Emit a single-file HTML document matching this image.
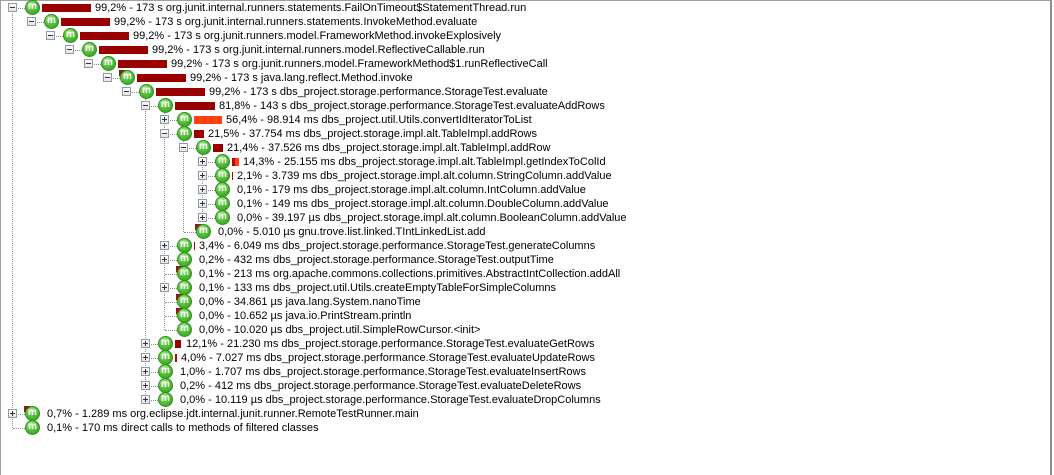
<!DOCTYPE html>
<html><head><meta charset="utf-8"><style>
body{margin:0;width:1054px;height:475px;background:#fff;position:relative;overflow:hidden;font-family:"Liberation Sans",Tahoma,sans-serif;font-size:11px;color:#000}
.fr{position:absolute;top:0;left:0;width:1px;height:475px;background:#a0a0a0}
.ft{position:absolute;top:0;left:0;width:1052px;height:1px;background:#a0a0a0}
.fr2{position:absolute;top:0;left:1050px;width:2px;height:475px;background:#8a8e96}
.v{position:absolute;width:0;border-left:1px dotted #8c8c8c}
.r{position:absolute;height:14px;width:900px}
.h{position:absolute;left:13px;top:7px;width:12px;border-top:1px dotted #8c8c8c}
.x{position:absolute;left:8px;top:2px;width:7px;height:7px;border:1px solid #8f9aa8;background:linear-gradient(#fff,#e4e4e4)}
.x:before{content:"";position:absolute;left:1px;top:3px;width:5px;height:1px;background:#333}
.p:after{content:"";position:absolute;left:3px;top:1px;width:1px;height:5px;background:#333}
.i{position:absolute;left:25px;top:-1px;width:13px;height:13px;border-radius:50%;border:1px solid #2f8f1c;background:radial-gradient(circle at 40% 30%,#b9f0a0 0,#55c23a 45%,#2e9a1c 100%);color:#fff;font-weight:bold;font-size:10px;line-height:12px;text-align:center;font-family:"Liberation Sans",sans-serif}
.c{position:absolute;left:24px;top:-1px;width:0;height:0;border-top:7px solid #8b1a1a;border-right:7px solid transparent}
.b{position:absolute;left:42px;top:3px;height:8px;background:#990000}
.t{position:absolute;top:0;line-height:14px;white-space:nowrap}
</style></head><body>
<div class="fr"></div><div class="ft"></div><div class="fr2"></div>
<div class="v" style="left:12px;top:8px;height:420px"></div>
<div class="v" style="left:145px;top:99px;height:301px"></div>
<div class="v" style="left:164px;top:113px;height:217px"></div>
<div class="v" style="left:183px;top:141px;height:91px"></div>
<div class="v" style="left:202px;top:155px;height:63px"></div>

<div class="r" style="top:1px;left:0px"><div class="h"></div><div class="x"></div><div class="i">m</div><div class="b" style="width:49px"></div><div class="t" style="left:95px">99,2% - 173 s org.junit.internal.runners.statements.FailOnTimeout$StatementThread.run</div></div>
<div class="r" style="top:15px;left:19px"><div class="h"></div><div class="x"></div><div class="i">m</div><div class="b" style="width:49px"></div><div class="t" style="left:95px">99,2% - 173 s org.junit.internal.runners.statements.InvokeMethod.evaluate</div></div>
<div class="r" style="top:29px;left:38px"><div class="h"></div><div class="x"></div><div class="i">m</div><div class="b" style="width:49px"></div><div class="t" style="left:95px">99,2% - 173 s org.junit.runners.model.FrameworkMethod.invokeExplosively</div></div>
<div class="r" style="top:43px;left:57px"><div class="h"></div><div class="x"></div><div class="i">m</div><div class="b" style="width:49px"></div><div class="t" style="left:95px">99,2% - 173 s org.junit.internal.runners.model.ReflectiveCallable.run</div></div>
<div class="r" style="top:57px;left:76px"><div class="h"></div><div class="x"></div><div class="i">m</div><div class="b" style="width:49px"></div><div class="t" style="left:95px">99,2% - 173 s org.junit.runners.model.FrameworkMethod$1.runReflectiveCall</div></div>
<div class="r" style="top:71px;left:95px"><div class="h"></div><div class="x"></div><div class="c"></div><div class="i">m</div><div class="b" style="width:49px"></div><div class="t" style="left:95px">99,2% - 173 s java.lang.reflect.Method.invoke</div></div>
<div class="r" style="top:85px;left:114px"><div class="h"></div><div class="x"></div><div class="i">m</div><div class="b" style="width:49px"></div><div class="t" style="left:95px">99,2% - 173 s dbs_project.storage.performance.StorageTest.evaluate</div></div>
<div class="r" style="top:99px;left:133px"><div class="h"></div><div class="x"></div><div class="i">m</div><div class="b" style="width:40px"></div><div class="t" style="left:86px">81,8% - 143 s dbs_project.storage.performance.StorageTest.evaluateAddRows</div></div>
<div class="r" style="top:113px;left:152px"><div class="h"></div><div class="x p"></div><div class="i">m</div><div class="b" style="width:28px;background:#ff4010"></div><div class="t" style="left:74px">56,4% - 98.914 ms dbs_project.util.Utils.convertIdIteratorToList</div></div>
<div class="r" style="top:127px;left:152px"><div class="h"></div><div class="x"></div><div class="i">m</div><div class="b" style="width:10px"></div><div class="t" style="left:56px">21,5% - 37.754 ms dbs_project.storage.impl.alt.TableImpl.addRows</div></div>
<div class="r" style="top:141px;left:171px"><div class="h"></div><div class="x"></div><div class="i">m</div><div class="b" style="width:10px"></div><div class="t" style="left:56px">21,4% - 37.526 ms dbs_project.storage.impl.alt.TableImpl.addRow</div></div>
<div class="r" style="top:155px;left:190px"><div class="h"></div><div class="x p"></div><div class="i">m</div><div class="b" style="width:7px;background:linear-gradient(90deg,#c00000 0,#c00000 40%,#ff4010 40%)"></div><div class="t" style="left:53px">14,3% - 25.155 ms dbs_project.storage.impl.alt.TableImpl.getIndexToColId</div></div>
<div class="r" style="top:169px;left:190px"><div class="h"></div><div class="x p"></div><div class="i">m</div><div class="b" style="width:1px;background:#c00000"></div><div class="t" style="left:47px">2,1% - 3.739 ms dbs_project.storage.impl.alt.column.StringColumn.addValue</div></div>
<div class="r" style="top:183px;left:190px"><div class="h"></div><div class="x p"></div><div class="i">m</div><div class="t" style="left:47px">0,1% - 179 ms dbs_project.storage.impl.alt.column.IntColumn.addValue</div></div>
<div class="r" style="top:197px;left:190px"><div class="h"></div><div class="x p"></div><div class="i">m</div><div class="t" style="left:47px">0,1% - 149 ms dbs_project.storage.impl.alt.column.DoubleColumn.addValue</div></div>
<div class="r" style="top:211px;left:190px"><div class="h"></div><div class="x p"></div><div class="i">m</div><div class="t" style="left:47px">0,0% - 39.197 µs dbs_project.storage.impl.alt.column.BooleanColumn.addValue</div></div>
<div class="r" style="top:225px;left:171px"><div class="h"></div><div class="c"></div><div class="i">m</div><div class="t" style="left:47px">0,0% - 5.010 µs gnu.trove.list.linked.TIntLinkedList.add</div></div>
<div class="r" style="top:239px;left:152px"><div class="h"></div><div class="x p"></div><div class="i">m</div><div class="b" style="width:1px;background:#c00000"></div><div class="t" style="left:47px">3,4% - 6.049 ms dbs_project.storage.performance.StorageTest.generateColumns</div></div>
<div class="r" style="top:253px;left:152px"><div class="h"></div><div class="x p"></div><div class="i">m</div><div class="t" style="left:47px">0,2% - 432 ms dbs_project.storage.performance.StorageTest.outputTime</div></div>
<div class="r" style="top:267px;left:152px"><div class="h"></div><div class="c"></div><div class="i">m</div><div class="t" style="left:47px">0,1% - 213 ms org.apache.commons.collections.primitives.AbstractIntCollection.addAll</div></div>
<div class="r" style="top:281px;left:152px"><div class="h"></div><div class="x p"></div><div class="i">m</div><div class="t" style="left:47px">0,1% - 133 ms dbs_project.util.Utils.createEmptyTableForSimpleColumns</div></div>
<div class="r" style="top:295px;left:152px"><div class="h"></div><div class="c"></div><div class="i">m</div><div class="t" style="left:47px">0,0% - 34.861 µs java.lang.System.nanoTime</div></div>
<div class="r" style="top:309px;left:152px"><div class="h"></div><div class="c"></div><div class="i">m</div><div class="t" style="left:47px">0,0% - 10.652 µs java.io.PrintStream.println</div></div>
<div class="r" style="top:323px;left:152px"><div class="h"></div><div class="i">m</div><div class="t" style="left:47px">0,0% - 10.020 µs dbs_project.util.SimpleRowCursor.&lt;init&gt;</div></div>
<div class="r" style="top:337px;left:133px"><div class="h"></div><div class="x p"></div><div class="i">m</div><div class="b" style="width:6px"></div><div class="t" style="left:53px">12,1% - 21.230 ms dbs_project.storage.performance.StorageTest.evaluateGetRows</div></div>
<div class="r" style="top:351px;left:133px"><div class="h"></div><div class="x p"></div><div class="i">m</div><div class="b" style="width:2px;background:#c00000"></div><div class="t" style="left:48px">4,0% - 7.027 ms dbs_project.storage.performance.StorageTest.evaluateUpdateRows</div></div>
<div class="r" style="top:365px;left:133px"><div class="h"></div><div class="x p"></div><div class="i">m</div><div class="t" style="left:47px">1,0% - 1.707 ms dbs_project.storage.performance.StorageTest.evaluateInsertRows</div></div>
<div class="r" style="top:379px;left:133px"><div class="h"></div><div class="x p"></div><div class="i">m</div><div class="t" style="left:47px">0,2% - 412 ms dbs_project.storage.performance.StorageTest.evaluateDeleteRows</div></div>
<div class="r" style="top:393px;left:133px"><div class="h"></div><div class="x p"></div><div class="i">m</div><div class="t" style="left:47px">0,0% - 10.119 µs dbs_project.storage.performance.StorageTest.evaluateDropColumns</div></div>
<div class="r" style="top:407px;left:0px"><div class="h"></div><div class="x p"></div><div class="c"></div><div class="i">m</div><div class="t" style="left:47px">0,7% - 1.289 ms org.eclipse.jdt.internal.junit.runner.RemoteTestRunner.main</div></div>
<div class="r" style="top:421px;left:0px"><div class="h"></div><div class="i">m</div><div class="t" style="left:47px">0,1% - 170 ms direct calls to methods of filtered classes</div></div>
</body></html>
